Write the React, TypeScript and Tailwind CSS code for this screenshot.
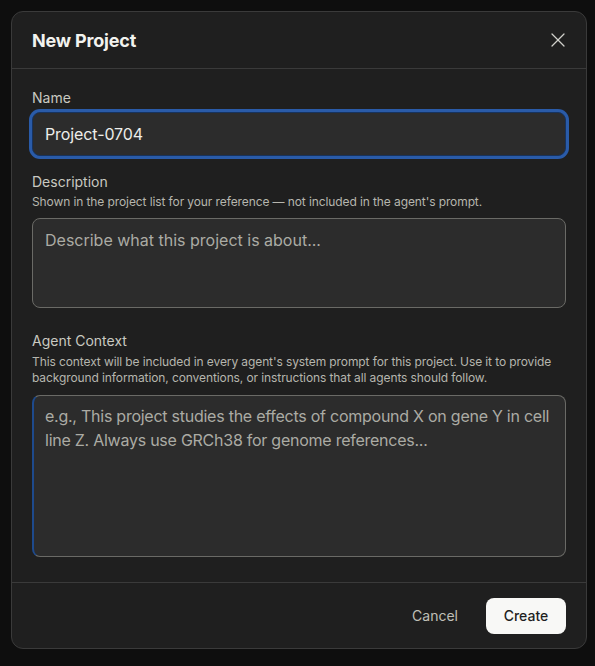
import { X } from 'lucide-react';

const font = { fontFamily: 'Inter, "Noto Sans", sans-serif' };

const contextHint =
  'e.g., This project studies the effects of compound X on gene Y in cell\nline Z. Always use GRCh38 for genome references...';

export default function App() {
  return (
    <div style={font} className="min-h-[666px] w-full bg-[#0e0e0e] p-[11px] pr-[8px]">
      <div className="flex h-[638px] w-[576px] flex-col rounded-xl border border-[#3a3a3a] bg-[#1f1f1f]">
        <div className="flex h-[57px] items-center justify-between border-b border-[#3a3a3a] pl-5 pr-4">
          <h2 className="text-[18px] font-bold tracking-[-0.01em] text-[#f2f2ee]">New Project</h2>
          <button className="text-[#d0d0ca]">
            <X className="h-6 w-6" strokeWidth={1.25} />
          </button>
        </div>

        <div className="flex-1 px-5 pt-[19px]">
          <label className="mb-1 block text-sm leading-5 text-[#c9c9c1]">Name</label>
          <input
            defaultValue="Project-0704"
            className="h-[44px] w-full rounded-lg border border-[#17335e] bg-[#2c2c2c] px-3 text-[16px] tracking-[-0.1px] text-[#ededea] outline-none ring-[3px] ring-[#2a5ba8]"
          />

          <label className="mt-4 block text-sm leading-5 text-[#c9c9c1]">Description</label>
          <p className="mt-[2px] text-xs leading-4 tracking-[-0.1px] text-[#b6b6ae]">
            Shown in the project list for your reference — not included in the agent's prompt.
          </p>
          <textarea
            placeholder="Describe what this project is about..."
            className="mt-2 block h-[90px] w-full resize-none rounded-lg border border-[#6a6a66] bg-[#2c2c2c] px-3 pt-[9px] text-[16px] leading-6 text-[#ededea] outline-none placeholder:text-[#ababa4]"
          />

          <label className="mt-[23px] block text-sm leading-5 text-[#c9c9c1]">Agent Context</label>
          <p className="mt-[3px] text-xs leading-4 tracking-[-0.1px] text-[#b6b6ae]">
            This context will be included in every agent's system prompt for this project. Use it to provide
            background information, conventions, or instructions that all agents should follow.
          </p>
          <textarea
            placeholder={contextHint}
            className="mt-[9px] block h-[162px] w-full resize-none rounded-lg border border-[#6a6a66] border-l-2 border-l-[#1e4a8c] bg-[#2c2c2c] pl-[11px] pr-1 pt-2 text-[16px] leading-6 tracking-[-0.25px] text-[#ededea] outline-none placeholder:text-[#ababa4]"
          />
        </div>

        <div className="flex h-[66px] items-center justify-end gap-7 border-t border-[#3a3a3a] px-5">
          <button className="text-sm text-[#c0c0b8]">Cancel</button>
          <button className="h-9 w-20 rounded-lg bg-[#f8f8f6] text-sm font-medium text-[#1f1f1f]">Create</button>
        </div>
      </div>
    </div>
  );
}
